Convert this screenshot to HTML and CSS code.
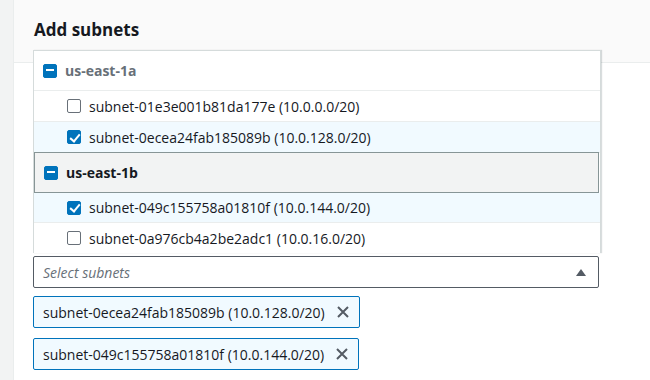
FILE: index.html
```html
<!DOCTYPE html>
<html>
<head>
<meta name="viewport" content="width=device-width, initial-scale=1">
<title>Add subnets</title>
<link rel="stylesheet" href="styles.css">
</head>
<body>

<div class="page">
  <div class="sidebar"></div>

  <div class="main">
    <div class="header">
      <h2 class="title">Add subnets</h2>
    </div>

    <div class="content">
      <div class="select">

        <!-- dropdown opens upward, over the header -->
        <ul class="dropdown">
          <li class="group-head">
            <span class="box box-minus"></span>
            <span class="group-name muted">us-east-1a</span>
          </li>
          <li class="option">
            <span class="box"></span>
            <span>subnet-01e3e001b81da177e (10.0.0.0/20)</span>
          </li>
          <li class="option selected">
            <span class="box box-checked"></span>
            <span>subnet-0ecea24fab185089b (10.0.128.0/20)</span>
          </li>
          <li class="group-head highlighted">
            <span class="box box-minus"></span>
            <span class="group-name">us-east-1b</span>
          </li>
          <li class="option selected after-head">
            <span class="box box-checked"></span>
            <span>subnet-049c155758a01810f (10.0.144.0/20)</span>
          </li>
          <li class="option">
            <span class="box"></span>
            <span>subnet-0a976cb4a2be2adc1 (10.0.16.0/20)</span>
          </li>
        </ul>

        <div class="trigger">
          <span class="placeholder">Select subnets</span>
          <span class="caret"></span>
        </div>
      </div>

      <div class="tokens">
        <div class="token">
          <span>subnet-0ecea24fab185089b (10.0.128.0/20)</span>
          <svg class="dismiss" width="12" height="12" viewBox="0 0 12 12"><path d="M1 1 L11 11 M11 1 L1 11" stroke="#545b64" stroke-width="2" fill="none"/></svg>
        </div>
        <div class="token">
          <span>subnet-049c155758a01810f (10.0.144.0/20)</span>
          <svg class="dismiss" width="12" height="12" viewBox="0 0 12 12"><path d="M1 1 L11 11 M11 1 L1 11" stroke="#545b64" stroke-width="2" fill="none"/></svg>
        </div>
      </div>
    </div>
  </div>
</div>

</body>
</html>
```

FILE: styles.css
```css
* {
  box-sizing: border-box;
}

body {
  margin: 0;
  font-family: "Open Sans", "Noto Sans", sans-serif;
  font-size: 14px;
  color: #16191f;
  background: #fff;
}

.page {
  display: flex;
  min-height: 380px;
}

/* left rail */
.sidebar {
  width: 14px;
  background: #f2f3f3;
  border-right: 1px solid #eaeded;
}

.main {
  flex: 1;
}

/* gray header strip with the title */
.header {
  height: 63px;
  background: #fafafa;
  border-bottom: 1px solid #eaeded;
  padding: 16px 20px 0;
}

.title {
  margin: 0;
  font-size: 17px;
  font-weight: 700;
  line-height: 28px;
}

.content {
  padding: 193px 0 0 19px;
}

.select {
  position: relative;
  width: 566px;
}

/* the open menu */
.dropdown {
  position: absolute;
  left: 0;
  bottom: calc(100% + 3px);
  width: 568px;
  margin: 0;
  padding: 0;
  list-style: none;
  background: #fff;
  border: 1px solid #d5dbdb;
  border-bottom: none;
  box-shadow: 1px 0 1px rgba(0, 28, 36, 0.15);
}

.group-head {
  display: flex;
  align-items: center;
  gap: 8px;
  height: 40px;
  padding-left: 9px;
  border-bottom: 1px solid #eaeded;
  font-weight: 700;
}

.group-head.highlighted {
  height: 41px;
  margin: -1px 1px 0 0;
  background: #f2f3f3;
  border: 1px solid #879596;
}

.group-name.muted {
  color: #687078;
}

.option {
  display: flex;
  align-items: center;
  gap: 8px;
  height: 31px;
  padding-left: 33px;
  border-bottom: 1px solid #eaeded;
}

.option.after-head {
  height: 30px;
}

.option:last-child {
  height: 30px;
  border-bottom: none;
}

.option.selected {
  background: #f1faff;
}

/* checkboxes */
.box {
  position: relative;
  flex: none;
  width: 14px;
  height: 14px;
  border: 1.5px solid #687078;
  border-radius: 2px;
  background: #fff;
}

.box-checked,
.box-minus {
  background: #0073bb;
  border-color: #0073bb;
}

.box-checked::after {
  content: '';
  position: absolute;
  left: 3.5px;
  top: 0.5px;
  width: 4px;
  height: 8px;
  border: solid #fff;
  border-width: 0 2px 2px 0;
  transform: rotate(40deg);
}

.box-minus::after {
  content: '';
  position: absolute;
  left: 1.5px;
  top: 4.5px;
  width: 8px;
  height: 2px;
  background: #fff;
}

/* closed trigger under the menu */
.trigger {
  display: flex;
  align-items: center;
  justify-content: space-between;
  height: 32px;
  padding: 0 12px 0 9px;
  border: 1px solid #545b64;
  border-radius: 2px;
}

.placeholder {
  font-style: italic;
  color: #687078;
}

.caret {
  width: 0;
  height: 0;
  border-left: 5px solid transparent;
  border-right: 5px solid transparent;
  border-bottom: 7px solid #545b64;
}

/* selected tokens */
.tokens {
  display: flex;
  flex-direction: column;
  align-items: flex-start;
  gap: 10px;
  margin-top: 8px;
}

.token {
  display: flex;
  align-items: center;
  gap: 12px;
  height: 32px;
  padding: 0 10px 0 9px;
  background: #f1faff;
  border: 1px solid #0073bb;
  border-radius: 2px;
}

.dismiss {
  flex: none;
}
```
